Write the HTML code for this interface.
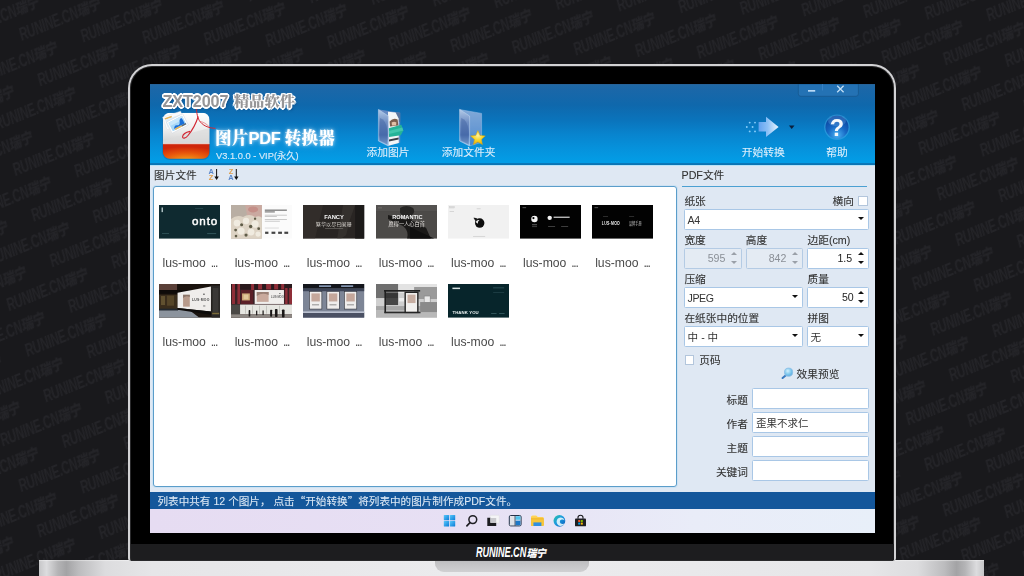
<!DOCTYPE html>
<html lang="zh-CN">
<head>
<meta charset="utf-8">
<title>图片PDF转换器</title>
<style>
*{box-sizing:border-box;margin:0;padding:0}
html,body{width:1024px;height:576px;overflow:hidden;background:#19191c}
body{position:relative;font-family:"Liberation Sans","Noto Sans CJK SC",sans-serif;font-size:10.5px;color:#222}
.abs{position:absolute}
#bg{left:0;top:0;width:1024px;height:576px}
#lid{left:128px;top:64px;width:768px;height:497px;background:#000;border:2.5px solid #d2d2d4;border-bottom:none;border-radius:24px 24px 3px 3px;box-shadow:inset 0 0 0 1px #2a2a2c}
#chin{left:130.5px;top:544px;width:763px;height:16px;background:#1d1d1f}
#chinlogo{left:470px;top:544px}
#base{left:39px;top:560px;width:945px;height:16px;background:linear-gradient(180deg,rgba(255,255,255,.55) 0,rgba(255,255,255,0) 1.6px),linear-gradient(90deg,#c6c6c8 0,#dcdcde 0.8%,#b4b4b6 2%,#a3a3a5 2.9%,#bcbcbe 4.2%,#dcdcde 7%,#e6e6e8 12%,#ececee 50%,#e6e6e8 88%,#dcdcde 93%,#bcbcbe 95.8%,#a3a3a5 97.1%,#b4b4b6 98%,#dcdcde 99.2%,#c6c6c8 100%)}
#notch{left:435px;top:560px;width:154px;height:11.5px;background:linear-gradient(180deg,#bdbdbf,#d0d0d2);border-radius:0 0 9px 9px;box-shadow:inset 0 1px 1px #a8a8aa}
#screen{opacity:0.999;left:150px;top:84px;width:725px;height:448.7px;background:#dfe8f3;overflow:hidden}
#hdr{left:0;top:0;width:725px;height:80.6px;background:linear-gradient(180deg,#2a5f92 0,#1f69a6 1.4px,#1b67a8 6%,#0f68ac 26%,#0a74bc 45%,#0884ce 62%,#0692dc 80%,#039de6 96%,#039de6 78.6px,#0b74b4 79.6px,#0b74b4 100%)}
#tbar{left:0;top:80.6px;width:725px;height:22px;background:#dfe8f3;border-top:1px solid #b9e3f8}
.lbl{position:absolute;white-space:nowrap;line-height:14px;height:14px;color:#333;font-size:10.7px;-webkit-text-stroke:0.1px #333}
.hl{position:absolute;white-space:nowrap;line-height:14px;height:14px;color:#dceefb;font-size:10.75px;text-align:center;-webkit-text-stroke:0.1px #dceefb}
#list{left:3px;top:102px;width:524px;height:301px;background:#fff;border:1.2px solid #5b9dca;border-radius:3px;box-shadow:0 0 0 1px #cde2f3}
.th{position:absolute;width:61.2px;height:33.6px;overflow:hidden}
.th svg{display:block;width:61.2px;height:33.6px}
.nm{position:absolute;width:61.2px;text-align:center;font-size:12.2px;line-height:14px;color:#4a4a4a;white-space:nowrap;letter-spacing:0}
.fld{position:absolute;background:#fff;border:1px solid #a9c7e6;border-radius:1.5px}
.fld.dis{background:#e4ebf3;border-color:#b4cbe4}
.fld .t{position:absolute;left:2.6px;top:0;bottom:0;display:flex;align-items:center;font-size:10.6px;letter-spacing:-0.45px;color:#333;white-space:nowrap}
.fld .r{position:absolute;top:0;bottom:1.4px;display:flex;align-items:center;font-size:10.6px;letter-spacing:-0.1px;color:#222;white-space:nowrap}
.fld.dis .r{color:#8a8f96}
.dd{position:absolute;width:0;height:0;border-left:3.1px solid transparent;border-right:3.1px solid transparent;border-top:3.5px solid #111;margin-left:-0.5px}
.up{position:absolute;width:0;height:0;border-left:3.1px solid transparent;border-right:3.1px solid transparent;border-bottom:3.4px solid #111;margin-left:-0.5px}
.dis .dd{border-top-color:#9aa0a8}.dis .up{border-bottom-color:#9aa0a8}
.cb{position:absolute;width:9.5px;height:9.5px;background:#fff;border:1px solid #b3c6dc}
#brand{left:12.5px;top:5.5px;height:20px;line-height:20px;white-space:nowrap;font-weight:bold;font-size:16.2px;color:#959597;letter-spacing:-0.1px;text-shadow:-1.2px -1.2px 0 #fff,1.2px -1.2px 0 #fff,-1.2px 1.2px 0 #fff,1.2px 1.2px 0 #fff,0 -1.6px 0 #fff,0 1.6px 0 #fff,-1.6px 0 0 #fff,1.6px 0 0 #fff,0 0 2px #fff,1.5px 2.2px 2.5px rgba(0,30,80,.5)}
#brand span{display:inline-block;transform:scaleY(0.86);transform-origin:50% 62%;margin-left:1px;font-family:"Noto Serif CJK SC","Liberation Serif",serif;font-weight:900;font-size:15.3px;letter-spacing:0}
#title{left:65px;top:41px;height:24px;line-height:24px;white-space:nowrap;font-family:"Noto Serif CJK SC","Liberation Serif",serif;font-weight:900;font-size:16.6px;color:#fff;letter-spacing:0.2px;text-shadow:0 0 3px rgba(255,255,255,.75),0 0 6px rgba(190,225,255,.6)}
#title b{font-family:"Liberation Sans",sans-serif;font-weight:bold;font-size:16.5px;letter-spacing:-0.4px}
#ver{left:66px;top:65px;height:14px;line-height:14px;white-space:nowrap;font-size:9.3px;color:#d6eaf9;-webkit-text-stroke:0.15px #d6eaf9}
.nm i{font-style:normal;letter-spacing:-1.3px;margin-left:1.5px}
#status q{quotes:none;font-family:"Noto Sans CJK SC",sans-serif}
#status q::before,#status q::after{content:none}
#status{left:0;top:407.5px;width:725px;height:17.8px;background:#14579b}
#status span{position:absolute;left:7.5px;top:1.5px;line-height:15px;color:#dde9f5;font-size:10.6px;white-space:nowrap;letter-spacing:0;-webkit-text-stroke:0.08px #dde9f5}
#task{left:0;top:425.3px;width:725px;height:23.4px;background:linear-gradient(90deg,#e6dcf2 0,#e7e0f4 45%,#e9ecf8 75%,#e8eff9 100%)}
</style>
</head>
<body>
<svg id="bg" class="abs" width="1024" height="576" viewBox="0 0 1024 576">
<defs>
<pattern id="wm" width="113" height="49.2" patternUnits="userSpaceOnUse" patternTransform="translate(811 43.6) rotate(-22)">
<g fill="#242428" font-family="Liberation Sans, sans-serif" font-weight="bold" font-style="italic">
<text transform="translate(4 22) scale(1 1.65)" font-size="11.4" letter-spacing="-0.15">RUNINE.CN</text><text transform="translate(65.5 21) scale(1 1.15)" font-size="12.5" letter-spacing="-0.5" font-family="Noto Sans CJK SC, sans-serif" font-weight="900">瑞宁</text>
<text transform="translate(60.5 46.6) scale(1 1.65)" font-size="11.4" letter-spacing="-0.15">RUNINE.CN</text><text transform="translate(122.0 45.6) scale(1 1.15)" font-size="12.5" letter-spacing="-0.5" font-family="Noto Sans CJK SC, sans-serif" font-weight="900">瑞宁</text>
<text transform="translate(-52.5 46.6) scale(1 1.65)" font-size="11.4" letter-spacing="-0.15">RUNINE.CN</text><text transform="translate(9.0 45.6) scale(1 1.15)" font-size="12.5" letter-spacing="-0.5" font-family="Noto Sans CJK SC, sans-serif" font-weight="900">瑞宁</text>
</g>
</pattern>
</defs>
<rect width="1024" height="576" fill="#19191c"/>
<rect width="1024" height="576" fill="url(#wm)"/>
</svg>

<div id="base" class="abs"></div>
<div id="notch" class="abs"></div>
<div id="lid" class="abs"></div>
<div id="chin" class="abs"></div>
<svg id="chinlogo" class="abs" width="90" height="16" viewBox="470 544 90 16"><g fill="#fff" font-weight="bold" font-style="italic"><text transform="translate(476 557.2) scale(1 1.5)" font-family="Liberation Sans, sans-serif" font-size="9.2" letter-spacing="-0.1">RUNINE.CN</text><text transform="translate(526.4 556.6) scale(1 1.05)" font-family="Noto Sans CJK SC, sans-serif" font-weight="900" font-size="10" letter-spacing="-0.3">瑞宁</text></g></svg>

<div id="screen" class="abs">
<div id="hdr" class="abs"></div>
<svg class="abs" style="left:0;top:0" width="725" height="81" viewBox="150 84 725 81">
<defs>
<linearGradient id="icTop" x1="0" y1="0" x2="0" y2="1"><stop offset="0" stop-color="#ffffff"/><stop offset="0.55" stop-color="#ededed"/><stop offset="1" stop-color="#cfcfcf"/></linearGradient>
<radialGradient id="icRed" cx="0.5" cy="1.1" r="0.9"><stop offset="0" stop-color="#f7a21a"/><stop offset="0.55" stop-color="#e8560c"/><stop offset="1" stop-color="#cf260a"/></radialGradient>
<clipPath id="icClip"><rect x="162.8" y="112.8" width="46.8" height="46" rx="7" ry="7"/></clipPath>
<linearGradient id="fFront" x1="0" y1="0" x2="0" y2="1"><stop offset="0" stop-color="#b4cbe8"/><stop offset="0.35" stop-color="#6f8fc4"/><stop offset="0.7" stop-color="#4f74b4"/><stop offset="1" stop-color="#a5cdf2"/></linearGradient>
<linearGradient id="fBack" x1="0" y1="0" x2="0" y2="1"><stop offset="0" stop-color="#8fb0dc"/><stop offset="0.6" stop-color="#6f9ad4"/><stop offset="1" stop-color="#3f86d6"/></linearGradient>
<linearGradient id="arw" x1="0" y1="0" x2="1" y2="0"><stop offset="0" stop-color="#62a2f0"/><stop offset="0.45" stop-color="#8cc0f6"/><stop offset="1" stop-color="#e8f5ff"/></linearGradient>
<radialGradient id="hlp" cx="0.5" cy="0.85" r="0.8"><stop offset="0" stop-color="#49b2f4"/><stop offset="0.5" stop-color="#1668c4"/><stop offset="1" stop-color="#0a449e"/></radialGradient>
<radialGradient id="star" cx="0.5" cy="0.35" r="0.7"><stop offset="0" stop-color="#fff3a0"/><stop offset="0.5" stop-color="#f8d426"/><stop offset="1" stop-color="#e2a90c"/></radialGradient>
<filter id="blur1" x="-20%" y="-20%" width="140%" height="140%"><feGaussianBlur stdDeviation="0.7"/></filter>
</defs>
<!-- window buttons -->
<path d="M798.3 84 V93.8 Q798.3 96.3 800.8 96.3 H855.9 Q858.4 96.3 858.4 93.8 V84 Z" fill="#2472b4" stroke="#17588f" stroke-width="0.8"/>
<path d="M822.5 84 V90.5" stroke="#3b84c8" stroke-width="0.8"/>
<rect x="808" y="90" width="7.2" height="1.7" fill="#b9d9f5"/>
<path d="M837.2 85.8 L843.6 92.2 M843.6 85.8 L837.2 92.2" stroke="#c4e0f7" stroke-width="1.25" fill="none"/>
<!-- app icon -->
<rect x="162.3" y="113.3" width="47.8" height="46.6" rx="7.5" fill="#0e4f8f" opacity="0.35" filter="url(#blur1)"/>
<g clip-path="url(#icClip)">
<rect x="162.8" y="112.8" width="46.8" height="31" fill="url(#icTop)"/>
<path d="M162.8 141 Q186 134 209.6 128 V144 H162.8 Z" fill="#dcdcdc" opacity="0.7"/>
<rect x="162.8" y="143.6" width="46.8" height="15.4" fill="url(#icRed)"/>
<rect x="162.8" y="143.2" width="46.8" height="1" fill="#f4f4f4" opacity="0.8"/>
</g>
<g transform="translate(173.75 120.4) rotate(-19)"><rect x="-9.5" y="-6.5" width="19" height="13" fill="#fbfbfb" stroke="#d9dde2" stroke-width="0.4"/><rect x="-8" y="-5" width="7.4" height="1.6" fill="#e5b45c"/><rect x="-8" y="-3.4" width="16" height="8.4" fill="#dfeefa"/></g>
<g transform="translate(177.4 123.5) rotate(-27)">
<rect x="-9.1" y="-6.35" width="18.2" height="12.7" fill="#fefefe" stroke="#cfd5dc" stroke-width="0.45"/>
<rect x="-7.6" y="-4.85" width="15.2" height="9.7" fill="#a6d7f8"/>
<path d="M-7.6 -4.85 H7.6 V-1 H-7.6 Z" fill="#c9e8fb"/>
<path d="M-5.4 3.4 Q-3.4 -0.6 -0.8 1.6 Q1.6 3.4 3.2 -1.6 Q4.6 -4 6.4 -2.6 L6.4 3.4 Z" fill="#1b70d8"/>
<rect x="-4.6" y="3.4" width="7.4" height="1.45" fill="#e7b458"/><rect x="2.8" y="3.4" width="4.8" height="1.45" fill="#5d6670"/>
</g>
<path d="M196.5 103.5 C196.2 111.5 197.2 117 199.3 120.5 C202.5 125.5 208 128 215.6 128.4" fill="none" stroke="#d22632" stroke-width="1"/>
<path d="M198.2 116.5 C196.5 122 192.5 130 188 135.5 C185.5 138.6 182.3 139 182.6 136.6 C182.9 134.3 186.5 132.2 190 131.4" fill="none" stroke="#d22632" stroke-width="1.1"/>
<path d="M199.8 121.5 C203 121.8 206.5 123.8 209 126.6" fill="none" stroke="#e46a70" stroke-width="0.7"/>
<!-- add picture icon -->
<path d="M379 109.6 L400.2 112.8 V142.6 L388.2 146 Z" fill="#6c8cc4" opacity="0.92"/>
<path d="M395 112.2 L400.2 112.8 V122 L396 121 Z" fill="#56739f"/>
<path d="M388 111.8 L395.6 112.6 L398.6 118.6 L398.8 143 L388.4 145.8 Z" fill="#f3f5f7"/>
<path d="M389.6 121.4 Q393 117.4 397.6 119.4 L398.4 125.6 L390 126.4 Z" fill="#7b5e4e"/>
<path d="M391.6 122.6 Q394 120.8 396.4 122.4 L396 125.4 L392 125.6 Z" fill="#e2c0a6"/>
<path d="M388.6 128.2 L401.3 124.8 L403.3 130.4 L400.8 135.2 L389 137 Z" fill="#25b398"/>
<path d="M388.8 131 L402.4 127.6 L403.3 130.4 L389 134 Z" fill="#4fd0b6" opacity="0.7"/>
<path d="M389 139.4 L398.6 137.4 L398.6 139.6 L389 141.6 Z" fill="#3a3f48"/>
<path d="M378.4 109.4 L388.3 116 V146 L378.4 141 Z" fill="url(#fFront)" stroke="#c4d8f0" stroke-width="0.5"/>
<path d="M380 118 Q386.5 120 387.4 131 V144.6 L380 140.6 Z" fill="#3d5f9e" opacity="0.45"/>
<!-- add folder icon -->
<path d="M459.8 109.6 L481.6 113.4 V142.4 L469.8 145.8 Z" fill="url(#fBack)" opacity="0.9" stroke="#a9c8ec" stroke-width="0.5"/>
<path d="M459.6 109.4 L469.6 116 V146 L459.6 141 Z" fill="url(#fFront)" stroke="#c4d8f0" stroke-width="0.5"/>
<path d="M461.2 118 Q467.8 120 468.6 131 V144.6 L461.2 140.6 Z" fill="#3d5f9e" opacity="0.45"/>
<path d="M477.9 130.6 L480 135.4 L485.2 135.9 L481.3 139.4 L482.4 144.5 L477.9 141.9 L473.4 144.5 L474.5 139.4 L470.6 135.9 L475.8 135.4 Z" fill="url(#star)" stroke="#e0a808" stroke-width="0.5" stroke-linejoin="round"/>
<!-- start arrow -->
<g fill="#86cdfb"><circle cx="749.7" cy="122.6" r="0.95"/><circle cx="755" cy="122.6" r="0.95"/><circle cx="746.8" cy="127" r="0.95"/><circle cx="752.6" cy="127" r="0.95"/><circle cx="749.7" cy="131.4" r="0.95"/><circle cx="755" cy="131.4" r="0.95"/></g>
<path d="M758.6 122 H766 V116.8 L778.6 126.9 L766 137 V131.5 H758.6 Z" fill="url(#arw)"/>
<path d="M788.9 125.6 H794.5 L791.7 128.9 Z" fill="#0b1f3d"/>
<!-- help -->
<circle cx="837" cy="127.2" r="12.8" fill="#5dbcf6" opacity="0.35" filter="url(#blur1)"/>
<circle cx="837" cy="127.2" r="11.5" fill="url(#hlp)"/>
<ellipse cx="837" cy="121" rx="9" ry="5.2" fill="#7ab8ee" opacity="0.28"/>
<text x="837" y="135.6" text-anchor="middle" font-family="Liberation Sans, sans-serif" font-weight="bold" font-size="23.5" fill="#f4f8fc">?</text>
</svg>

<div id="tbar" class="abs"></div>
<div class="abs" id="brand">ZXT2007 <span>精品软件</span></div>
<div class="abs" id="title">图片<b>PDF</b> 转换器</div>
<div class="abs" id="ver">V3.1.0.0 - VIP(永久)</div>
<div class="hl" style="left:208px;width:60px;top:61px">添加图片</div>
<div class="hl" style="left:283.7px;width:70px;top:61px">添加文件夹</div>
<div class="hl" style="left:583.2px;width:60px;top:61px">开始转换</div>
<div class="hl" style="left:657px;width:60px;top:61px">帮助</div>
<div class="lbl" style="left:4px;top:84px">图片文件</div>
<div class="lbl" style="left:531.5px;top:84px">PDF文件</div>
<svg class="abs" style="left:54px;top:81px" width="40" height="20" viewBox="204 165 40 20">
<g font-family="Liberation Sans, sans-serif" font-weight="bold" font-size="7.4" text-anchor="middle">
<text x="211.1" y="174" fill="#5b87c9">A</text><text x="211.1" y="180.2" fill="#dfa050">Z</text>
<text x="230.9" y="174" fill="#dfa050">Z</text><text x="230.9" y="180.2" fill="#5b87c9">A</text>
</g>
<path d="M216.6 169 V177.4" stroke="#111" stroke-width="1"/><path d="M214.4 176.6 H218.8 L216.6 180 Z" fill="#111"/>
<path d="M236.3 169 V177.4" stroke="#111" stroke-width="1"/><path d="M234.1 176.6 H238.5 L236.3 180 Z" fill="#111"/>
</svg>
<div id="list" class="abs"></div>
<div class="th" style="left:9.2px;top:121.0px"><svg viewBox="0 0 61 33.5" preserveAspectRatio="none"><rect width="61" height="33.5" fill="#0f2a30"/><rect x="2.6" y="2.5" width="1.2" height="4.6" fill="#cfe0e0"/><text x="32.8" y="19.7" font-family="Liberation Sans, sans-serif" font-size="11.6" fill="#fff" stroke="#fff" stroke-width="0.45" letter-spacing="0.9">onto</text><rect x="3" y="28" width="7" height="0.8" fill="#31555b"/><rect x="48" y="28" width="9" height="1" fill="#31555b"/><rect x="36" y="3" width="8" height="0.6" fill="#31555b"/></svg></div>
<div class="th" style="left:81.3px;top:121.0px"><svg viewBox="0 0 61 33.5" preserveAspectRatio="none"><rect width="61" height="33.5" fill="#fbfbfb"/><rect width="30.7" height="33.5" fill="#b9aea3"/><path d="M14 0 H30.7 V12 Q24 15 16 10 Z" fill="#caa9a0"/><ellipse cx="22" cy="4.4" rx="5" ry="3" fill="#c48f88"/><path d="M0 14 Q6 9 12 12 Q18 8 24 12 Q29 10 30.7 13 V33.5 H0 Z" fill="#ddd3c4"/><g fill="#f0ebe0"><circle cx="6" cy="18" r="3.4"/><circle cx="15" cy="16" r="3.2"/><circle cx="24" cy="19" r="3.6"/><circle cx="10" cy="26" r="3.6"/><circle cx="20" cy="27" r="3.4"/><circle cx="27" cy="29" r="2.6"/></g><g fill="#5f5c48"><circle cx="10.6" cy="19.6" r="1.5"/><circle cx="19.6" cy="21.4" r="1.7"/><circle cx="4.6" cy="25" r="1.4"/><circle cx="15" cy="30" r="1.6"/><circle cx="27.6" cy="23.6" r="1.4"/><circle cx="24" cy="13.6" r="1.2"/><circle cx="5" cy="31" r="1.3"/></g><rect x="33.7" y="4.6" width="22" height="1.1" fill="#666"/><rect x="33.7" y="6.4" width="10" height="1" fill="#666"/><rect x="33.7" y="9.8" width="22" height="0.6" fill="#aaa"/><rect x="33.7" y="11.3" width="12" height="0.6" fill="#aaa"/><rect x="33.7" y="14.3" width="22" height="0.6" fill="#aaa"/><rect x="33.7" y="15.8" width="15" height="0.6" fill="#aaa"/><rect x="33.7" y="22.7" width="14" height="0.5" fill="#bbb"/><g fill="#444"><rect x="34" y="26.6" width="3.3" height="2.2"/><rect x="40.4" y="26.6" width="3.8" height="2.2"/><rect x="47" y="26.6" width="3.8" height="2.2"/><rect x="53.2" y="26.6" width="3.8" height="2.2"/></g></svg></div>
<div class="th" style="left:153.4px;top:121.0px"><svg viewBox="0 0 61 33.5" preserveAspectRatio="none"><rect width="61" height="33.5" fill="#292523"/><path d="M0 0 H20 L12 33.5 H0 Z" fill="#3a3532" opacity="0.55"/><path d="M40 0 H52 L47 14 L43 30 L38 33.5 H34 Z" fill="#403b38" opacity="0.5"/><rect x="52" y="0" width="9" height="33.5" fill="#1c1a19"/><text x="31" y="14.4" text-anchor="middle" font-family="Liberation Sans, sans-serif" font-weight="bold" font-size="5.8" fill="#f4f4f4">FANCY</text><text x="30.6" y="21.4" text-anchor="middle" font-family="Noto Sans CJK SC, sans-serif" font-size="5.1" fill="#cfcbc6">繁华以尽已阑珊</text><rect x="22" y="23.4" width="18" height="0.5" fill="#8a8682"/></svg></div>
<div class="th" style="left:225.5px;top:121.0px"><svg viewBox="0 0 61 33.5" preserveAspectRatio="none"><rect width="61" height="33.5" fill="#4c4a48"/><rect width="61" height="6" fill="#545250"/><path d="M24 3 Q30 -1 37 3 Q40 8 34 11 Q27 12 24 8 Z" fill="#262524"/><path d="M12 10 Q22 12 30 15 L34 11 L36 16 Q44 18 50 23 L54.6 33.5 H31 Q33 26 27 21 Q18 17 12 14 Z" fill="#1a1918"/><path d="M34 22 L44 27 L58 33.5 H34 Z" fill="#0f0f0f"/><text x="31.3" y="14.4" text-anchor="middle" font-family="Liberation Sans, sans-serif" font-weight="bold" font-size="5.6" fill="#f6f6f6">ROMANTIC</text><text x="30.6" y="21.2" text-anchor="middle" font-family="Noto Sans CJK SC, sans-serif" font-size="5.2" fill="#e2dfdc">愿得一人心白首</text><rect x="2" y="2.6" width="4" height="0.6" fill="#807d7a"/></svg></div>
<div class="th" style="left:297.6px;top:121.0px"><svg viewBox="0 0 61 33.5" preserveAspectRatio="none"><rect width="61" height="33.5" fill="#f1f1f1"/><circle cx="31.6" cy="18" r="4.7" fill="#0d0d0d"/><path d="M25.4 12.8 Q28.4 12.2 30.2 14.4 L27.8 16.6 Z" fill="#1a1a1a"/><path d="M27.6 17 Q29 14.4 31.4 15 Q29.6 16 29.6 18.6 Z" fill="#f1f1f1"/><rect x="1.6" y="1.6" width="4.6" height="1.4" fill="#ddd" stroke="#bbb" stroke-width="0.3"/><rect x="1.6" y="6" width="4.4" height="0.5" fill="#bbb"/><rect x="28.6" y="3.6" width="4" height="0.5" fill="#bbb"/><rect x="25" y="30.9" width="12" height="0.5" fill="#bbb"/></svg></div>
<div class="th" style="left:369.7px;top:121.0px"><svg viewBox="0 0 61 33.5" preserveAspectRatio="none"><rect width="61" height="33.5" fill="#020202"/><circle cx="14.4" cy="14" r="3.2" fill="#f4f4f4"/><circle cx="13.4" cy="13" r="1.1" fill="#020202"/><circle cx="29.6" cy="12.8" r="2.2" fill="#f4f4f4"/><rect x="33.5" y="11.6" width="16" height="1.2" fill="#d8d8d8"/><rect x="12" y="19.4" width="5" height="0.7" fill="#888"/><rect x="12" y="21.4" width="5" height="0.6" fill="#666"/><rect x="28" y="21" width="7" height="0.6" fill="#666"/><rect x="41" y="21" width="7" height="0.6" fill="#666"/><rect x="2.5" y="2.4" width="3.6" height="0.7" fill="#777"/></svg></div>
<div class="th" style="left:441.8px;top:121.0px"><svg viewBox="0 0 61 33.5" preserveAspectRatio="none"><rect width="61" height="33.5" fill="#020202"/><text transform="translate(9.8 20.2) scale(0.8 1.25)" font-family="Liberation Sans, sans-serif" font-weight="bold" font-size="4.3" fill="#f0f0f0" letter-spacing="0.35">LUS·MOO</text><text transform="translate(36.8 20) scale(0.86 1.2)" font-family="Noto Sans CJK SC, sans-serif" font-size="3.6" fill="#c4c4c4" letter-spacing="0.1">品牌手册</text><rect x="2.5" y="2.4" width="3.6" height="0.7" fill="#777"/><rect x="11" y="11" width="5" height="0.5" fill="#555"/><rect x="37" y="11" width="5" height="0.5" fill="#555"/></svg></div>
<div class="th" style="left:9.2px;top:200.2px"><svg viewBox="0 0 61 33.5" preserveAspectRatio="none"><rect width="61" height="33.5" fill="#1a130e"/><rect x="0" y="0" width="18" height="6" fill="#5a4038"/><rect x="0" y="6" width="61" height="3.6" fill="#0f0b09"/><rect x="0" y="10.6" width="18.5" height="14.6" fill="#3a2d1c"/><rect x="2" y="12" width="4" height="9" fill="#6b5a36" opacity="0.8"/><rect x="8" y="11.6" width="7" height="10" fill="#5c4b2c" opacity="0.8"/><path d="M0 26 H30 L40 33.5 H0 Z" fill="#8b939d"/><path d="M0 24.6 H19 V26.4 H0 Z" fill="#20262e"/><path d="M18.5 8.75 L51.8 2.5 V27.5 L18.5 24 Z" fill="#efedeb"/><path d="M18.5 24 L51.8 27.5 V30.6 L18.5 25.8 Z" fill="#0d0b0a"/><path d="M51.8 1.6 H61 V33.5 H52.4 Z" fill="#2b2927"/><rect x="53.6" y="4" width="5.6" height="24" fill="#3a3836"/><rect x="53" y="28.6" width="7" height="1.6" fill="#7a6a3a"/><rect x="24" y="10.8" width="6.7" height="11.8" fill="#b79a8a"/><path d="M24 14 Q27 10.8 30.7 13 V10.8 H24 Z" fill="#8a7468"/><text x="33" y="17" font-family="Liberation Sans, sans-serif" font-weight="bold" font-size="3.4" fill="#4a4a4a" letter-spacing="0.2">LUS·MOO</text><rect x="44" y="9.6" width="1.6" height="1.2" fill="#555"/><rect x="44" y="21.4" width="2.2" height="1" fill="#777"/></svg></div>
<div class="th" style="left:81.3px;top:200.2px"><svg viewBox="0 0 61 33.5" preserveAspectRatio="none"><rect width="61" height="33.5" fill="#3a2226"/><rect width="61" height="5.4" fill="#2a1a1d"/><g fill="#8e2e38"><rect x="1" y="0" width="3" height="20"/><rect x="6.4" y="0" width="2.6" height="20"/><rect x="20" y="0" width="3" height="6"/><rect x="27" y="0" width="4" height="5.4"/><rect x="35" y="0" width="5" height="5.4"/><rect x="43" y="0" width="4" height="5.4"/><rect x="50" y="0" width="3" height="5.4"/><rect x="54" y="4" width="2.4" height="16"/><rect x="58" y="4" width="3" height="16"/></g><rect x="10" y="6" width="12" height="14" fill="#5a1f27"/><rect x="11" y="9.4" width="7.8" height="7" fill="#cba878"/><rect x="12.6" y="10.6" width="4.6" height="4.6" fill="#e2c69a"/><rect x="23.6" y="6" width="29.2" height="13.9" fill="#f0eeec"/><rect x="25.7" y="8" width="11.8" height="9.8" fill="#c9aa9d"/><path d="M25.7 12 Q31 8 37.5 11 V8 H25.7 Z" fill="#9a8176"/><text x="40" y="13.6" font-family="Liberation Sans, sans-serif" font-weight="bold" font-size="2.7" fill="#666">LUS·MOO</text><rect x="48" y="9" width="1.4" height="1" fill="#777"/><rect x="9" y="20.5" width="52" height="9.8" fill="#e6e6e1"/><rect x="0" y="20.5" width="9" height="13" fill="#4a4845"/><rect x="0" y="30.3" width="61" height="3.2" fill="#8d8883"/><g fill="#bdbdb8"><rect x="14" y="21.6" width="0.8" height="8"/><rect x="21" y="21.6" width="0.8" height="8"/><rect x="28" y="21.6" width="0.8" height="8"/><rect x="35" y="21.6" width="0.8" height="8"/><rect x="48" y="21.6" width="0.8" height="8"/></g><g fill="#1a1717"><rect x="17.6" y="26" width="1.6" height="6.4" rx="0.6"/><rect x="25" y="26.6" width="1.2" height="4.6"/><rect x="31.4" y="26.4" width="1.2" height="4.6"/><rect x="39" y="25.6" width="2" height="7" rx="0.7"/><rect x="43.8" y="25" width="2.6" height="8" rx="0.8"/><rect x="50.8" y="25.4" width="2.6" height="8" rx="0.8"/></g></svg></div>
<div class="th" style="left:153.4px;top:200.2px"><svg viewBox="0 0 61 33.5" preserveAspectRatio="none"><rect width="61" height="33.5" fill="#7d8596"/><rect width="61" height="4.6" fill="#14161c"/><rect x="16" y="1.4" width="12" height="1.4" fill="#9fb4d4"/><rect x="38" y="1.4" width="12" height="1.4" fill="#9fb4d4"/><rect y="4.6" width="61" height="2.6" fill="#3d4456"/><rect x="0" y="28.4" width="61" height="5.1" fill="#4a5063"/><rect x="0" y="27.4" width="61" height="1.4" fill="#c8cedc"/><g fill="#efedec" stroke="#2a2d36" stroke-width="0.6"><rect x="6.4" y="7.4" width="12.4" height="17.6"/><rect x="23.8" y="7.4" width="12.4" height="17.6"/><rect x="41.2" y="7.4" width="12.4" height="17.6"/></g><g fill="#c4a79b"><rect x="8.4" y="9.4" width="8.4" height="8"/><rect x="25.8" y="9.4" width="8.4" height="8"/><rect x="43.2" y="9.4" width="8.4" height="8"/></g><g fill="#777"><rect x="9" y="20.4" width="7" height="0.8"/><rect x="26.4" y="20.4" width="7" height="0.8"/><rect x="43.8" y="20.4" width="7" height="0.8"/></g></svg></div>
<div class="th" style="left:225.5px;top:200.2px"><svg viewBox="0 0 61 33.5" preserveAspectRatio="none"><rect width="61" height="33.5" fill="#cfcfcf"/><rect width="61" height="9" fill="#e3e3e3"/><rect x="0" y="0" width="22" height="14" fill="#6f6f6f"/><rect x="38" y="3" width="23" height="12" fill="#9a9a9a"/><rect x="0" y="22" width="61" height="4.4" fill="#a5a5a5"/><rect x="0" y="26.4" width="61" height="7.1" fill="#b8b8b8"/><rect x="8" y="6" width="36" height="1.6" fill="#1f1f1f"/><rect x="8.4" y="6" width="1.6" height="23" fill="#1f1f1f"/><rect x="10" y="9" width="12" height="12" fill="#2d2d2d" opacity="0.85"/><rect x="23" y="14" width="5" height="3.4" fill="#eee"/><rect x="8.4" y="27.6" width="36" height="1.6" fill="#2a2a2a"/><rect x="28.4" y="7.6" width="14" height="21.4" fill="#242424"/><rect x="29.8" y="9" width="11.2" height="18.6" fill="#f2f0ee"/><rect x="31.4" y="10.6" width="8" height="8.4" fill="#c7aea2"/><rect x="48" y="12" width="6" height="6.4" fill="#e8e8e8" stroke="#777" stroke-width="0.5"/><rect x="44" y="18" width="17" height="10" fill="#8a8a8a"/></svg></div>
<div class="th" style="left:297.6px;top:200.2px"><svg viewBox="0 0 61 33.5" preserveAspectRatio="none"><rect width="61" height="33.5" fill="#07252b"/><rect x="4.4" y="3.6" width="7.6" height="1.5" fill="#d6e2e2"/><rect x="45" y="3.4" width="11" height="0.9" fill="#2e5258"/><rect x="45" y="8" width="11" height="0.7" fill="#24464c"/><text x="4.4" y="30" font-family="Liberation Sans, sans-serif" font-weight="bold" font-size="4.3" fill="#e8efef" letter-spacing="0.1">THANK YOU</text><rect x="43" y="29" width="5.4" height="0.8" fill="#3a6066"/><rect x="51" y="29" width="5.4" height="0.8" fill="#3a6066"/></svg></div>
<div class="nm" style="left:9.2px;top:171.5px">lus-moo <i>...</i></div>
<div class="nm" style="left:81.3px;top:171.5px">lus-moo <i>...</i></div>
<div class="nm" style="left:153.4px;top:171.5px">lus-moo <i>...</i></div>
<div class="nm" style="left:225.5px;top:171.5px">lus-moo <i>...</i></div>
<div class="nm" style="left:297.6px;top:171.5px">lus-moo <i>...</i></div>
<div class="nm" style="left:369.7px;top:171.5px">lus-moo <i>...</i></div>
<div class="nm" style="left:441.8px;top:171.5px">lus-moo <i>...</i></div>
<div class="nm" style="left:9.2px;top:250.7px">lus-moo <i>...</i></div>
<div class="nm" style="left:81.3px;top:250.7px">lus-moo <i>...</i></div>
<div class="nm" style="left:153.4px;top:250.7px">lus-moo <i>...</i></div>
<div class="nm" style="left:225.5px;top:250.7px">lus-moo <i>...</i></div>
<div class="nm" style="left:297.6px;top:250.7px">lus-moo <i>...</i></div>
<div class="abs" style="left:531.5px;top:102.2px;width:185.5px;height:1px;background:#4ba0d2"></div>
<div class="lbl" style="left:534.4px;top:110.3px;">纸张</div>
<div class="lbl" style="right:21.0px;top:110.2px;text-align:right">横向</div>
<div class="cb" style="left:708px;top:112px"></div>
<div class="fld " style="left:534.0px;top:125.0px;width:185.0px;height:21.0px"><span class="t">A4</span><span class="dd" style="left:173.3px;top:6.9px"></span></div>
<div class="lbl" style="left:534.4px;top:149.3px;">宽度</div>
<div class="lbl" style="left:595.8px;top:149.3px;">高度</div>
<div class="lbl" style="left:657.5px;top:149.3px;">边距(cm)</div>
<div class="fld dis" style="left:534.0px;top:164.0px;width:58.0px;height:21.0px"><span class="r" style="right:15.8px">595</span><span class="up" style="left:46.3px;top:2.9px"></span><span class="dd" style="left:46.3px;top:12.1px"></span></div>
<div class="fld dis" style="left:596.0px;top:164.0px;width:57.0px;height:21.0px"><span class="r" style="right:15.8px">842</span><span class="up" style="left:45.1px;top:2.9px"></span><span class="dd" style="left:45.1px;top:12.1px"></span></div>
<div class="fld " style="left:657.0px;top:164.0px;width:62.0px;height:21.0px"><span class="r" style="right:16.0px">1.5</span><span class="up" style="left:50.3px;top:2.9px"></span><span class="dd" style="left:50.3px;top:12.1px"></span></div>
<div class="lbl" style="left:534.4px;top:188.1px;">压缩</div>
<div class="lbl" style="left:657.5px;top:188.1px;">质量</div>
<div class="fld " style="left:534.0px;top:203.0px;width:119.0px;height:21.0px"><span class="t">JPEG</span><span class="dd" style="left:107.3px;top:6.9px"></span></div>
<div class="fld " style="left:657.0px;top:203.0px;width:62.0px;height:21.0px"><span class="r" style="right:14.4px">50</span><span class="up" style="left:50.8px;top:2.9px"></span><span class="dd" style="left:50.8px;top:12.1px"></span></div>
<div class="lbl" style="left:534.4px;top:227.1px;">在纸张中的位置</div>
<div class="lbl" style="left:657.5px;top:227.1px;">拼图</div>
<div class="fld " style="left:534.0px;top:242.0px;width:119.0px;height:21.0px"><span class="t" style="letter-spacing:0">中 - 中</span><span class="dd" style="left:107.3px;top:6.9px"></span></div>
<div class="fld " style="left:657.0px;top:242.0px;width:62.0px;height:21.0px"><span class="t" style="letter-spacing:0">无</span><span class="dd" style="left:50.3px;top:6.9px"></span></div>
<div class="cb" style="left:534.5px;top:271px"></div>
<div class="lbl" style="left:549.2px;top:268.6px;">页码</div>
<svg class="abs" style="left:630px;top:282px" width="14" height="14" viewBox="780 366 14 14"><defs><radialGradient id="lens" cx="0.4" cy="0.35" r="0.7"><stop offset="0" stop-color="#d4f0fc"/><stop offset="0.6" stop-color="#7cc6ec"/><stop offset="1" stop-color="#58a6dc"/></radialGradient></defs><path d="M785.9 375.3 L782.6 378" stroke="#3a7ac0" stroke-width="2.1" stroke-linecap="round"/><circle cx="788.6" cy="372.2" r="4.1" fill="url(#lens)" stroke="#8fbfe6" stroke-width="0.9"/></svg>
<div class="lbl" style="left:646.6px;top:282.9px;">效果预览</div>
<div class="lbl" style="right:127.0px;top:308.9px;text-align:right">标题</div>
<div class="fld " style="left:602.0px;top:304.0px;width:117.0px;height:21.0px"></div>
<div class="lbl" style="right:127.0px;top:332.9px;text-align:right">作者</div>
<div class="fld " style="left:602.0px;top:328.0px;width:117.0px;height:21.0px"><span class="t" style="left:3px;font-size:10.5px;letter-spacing:0">歪果不求仁</span></div>
<div class="lbl" style="right:127.0px;top:356.9px;text-align:right">主题</div>
<div class="fld " style="left:602.0px;top:352.0px;width:117.0px;height:21.0px"></div>
<div class="lbl" style="right:127.0px;top:380.9px;text-align:right">关键词</div>
<div class="fld " style="left:602.0px;top:376.0px;width:117.0px;height:21.0px"></div>
<div id="status" class="abs"><span>列表中共有 12 个图片， 点击<q>“</q>开始转换<q>”</q>将列表中的图片制作成PDF文件。</span></div>
<div id="task" class="abs"></div>
<svg class="abs" style="left:290px;top:426px" width="150" height="22" viewBox="440 510 150 22">
<defs>
<linearGradient id="win" x1="0" y1="0" x2="1" y2="1"><stop offset="0" stop-color="#58c8fb"/><stop offset="1" stop-color="#0b7bd6"/></linearGradient>
<linearGradient id="fold" x1="0" y1="0" x2="0" y2="1"><stop offset="0" stop-color="#ffd75e"/><stop offset="1" stop-color="#f3b218"/></linearGradient>
<linearGradient id="edge" x1="0" y1="0" x2="1" y2="1"><stop offset="0" stop-color="#2fc6a0"/><stop offset="0.45" stop-color="#1a9be0"/><stop offset="1" stop-color="#0a56b8"/></linearGradient>
</defs>
<g fill="url(#win)"><rect x="443.8" y="515" width="5.3" height="5.3" rx="0.5"/><rect x="449.9" y="515" width="5.3" height="5.3" rx="0.5"/><rect x="443.8" y="521.1" width="5.3" height="5.3" rx="0.5"/><rect x="449.9" y="521.1" width="5.3" height="5.3" rx="0.5"/></g>
<circle cx="472.8" cy="519.6" r="3.9" fill="none" stroke="#1f1f24" stroke-width="1.5"/><path d="M470 522.6 L466.9 525.8" stroke="#1f1f24" stroke-width="1.7" stroke-linecap="round"/>
<rect x="490" y="515.3" width="9.3" height="8" rx="0.8" fill="#f4f4f6" stroke="#d6d6da" stroke-width="0.4"/><path d="M487.3 517.8 H490.4 V522.8 H496.2 V526 H487.3 Z" fill="#1d1d21"/><rect x="490.4" y="518" width="5.8" height="4.8" fill="#c9c9cd"/>
<rect x="509.3" y="515.5" width="11.8" height="10.4" rx="1.4" fill="#f6f6f8" stroke="#23324a" stroke-width="1"/><rect x="510" y="516.2" width="4.6" height="9" fill="#dfe2e8"/><rect x="515.4" y="516.2" width="5" height="3.6" fill="#4fc3ee"/><rect x="515.4" y="520.6" width="5" height="4.6" fill="#1e78c8"/><path d="M515 516 V525.6" stroke="#23324a" stroke-width="0.8"/>
<path d="M531 517 Q531 515.4 532.6 515.4 H536.2 L537.8 517 H542.4 Q543.8 517 543.8 518.4 V524.8 Q543.8 526 542.6 526 H532.2 Q531 526 531 524.8 Z" fill="url(#fold)"/><path d="M531 519.2 H543.8 V524.8 Q543.8 526 542.6 526 H532.2 Q531 526 531 524.8 Z" fill="#f7c63a"/><path d="M533.4 522.4 H541.4 V526 H533.4 Z" fill="#2f8fe0"/><path d="M531 518.8 H543.8" stroke="#e39f0f" stroke-width="0.5"/>
<circle cx="559.4" cy="520.8" r="5.9" fill="url(#edge)"/><path d="M556.6 521.8 Q556.8 518 560.4 517.6 Q563.8 517.6 564.6 520.6 Q563.6 519.4 561.8 519.6 Q559.6 520 559.8 522 Q560.2 524 562.6 524 Q564 523.8 564.8 523 Q563.4 526 560.2 526 Q556.8 525.4 556.6 521.8 Z" fill="#dff5fb" opacity="0.92"/>
<path d="M578 518.8 V517.4 Q578 515.2 580.5 515.2 Q583 515.2 583 517.4 V518.8" fill="none" stroke="#1b1b1f" stroke-width="1.1"/><rect x="575" y="518.4" width="11" height="7.9" rx="0.9" fill="#1f1f23"/><rect x="578.2" y="520" width="2" height="2" fill="#f25022"/><rect x="580.8" y="520" width="2" height="2" fill="#7fba00"/><rect x="578.2" y="522.6" width="2" height="2" fill="#00a4ef"/><rect x="580.8" y="522.6" width="2" height="2" fill="#ffb900"/>
</svg>

</div>
</body>
</html>
